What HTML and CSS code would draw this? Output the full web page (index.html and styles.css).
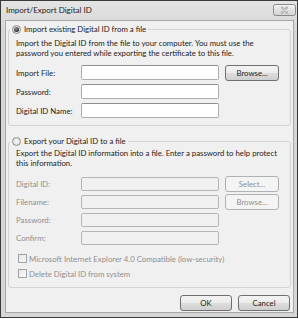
FILE: index.html
```html
<!DOCTYPE html>
<html>
<head>
<meta charset="utf-8">
<link rel="stylesheet" href="styles.css">
</head>
<body>
<div class="window">
  <div class="titlebar">
    <span class="title">Import/Export Digital ID</span>
    <span class="close">
      <svg width="23" height="12" viewBox="0 0 23 12">
        <defs>
          <linearGradient id="cg" x1="0" y1="0" x2="0" y2="1">
            <stop offset="0" stop-color="#f4f4f4"/>
            <stop offset="0.5" stop-color="#e2e2e2"/>
            <stop offset="1" stop-color="#d2d2d2"/>
          </linearGradient>
        </defs>
        <rect x="0.5" y="0.5" width="22" height="11" rx="2" fill="url(#cg)" stroke="#8a8a8a"/>
        <path d="M9 3.5 L14 8.5 M14 3.5 L9 8.5" stroke="#9a9a9a" stroke-width="2.2" stroke-linecap="round"/>
        <path d="M9 3.5 L14 8.5 M14 3.5 L9 8.5" stroke="#f6f6f6" stroke-width="0.9" stroke-linecap="round"/>
      </svg>
    </span>
  </div>
  <div class="client">
    <fieldset class="group group-import">
      <legend class="legend">
        <span class="radio radio-on"></span><span class="legend-text">Import existing Digital ID from a file</span>
      </legend>
      <div class="group-body">
        <p class="desc">Import the Digital ID from the file to your computer. You must use the<br>password you entered while exporting the certificate to this file.</p>
        <div class="form form-import">
          <span class="label">Import File:</span><span class="input"></span><span class="btn">Browse...</span>
          <span class="label">Password:</span><span class="input"></span><span></span>
          <span class="label">Digital ID Name:</span><span class="input"></span><span></span>
        </div>
      </div>
    </fieldset>

    <fieldset class="group group-export">
      <legend class="legend">
        <span class="radio"></span><span class="legend-text">Export your Digital ID to a file</span>
      </legend>
      <div class="group-body">
        <p class="desc">Export the Digital ID information into a file. Enter a password to help protect<br>this information.</p>
        <div class="form form-export">
          <span class="label dis">Digital ID:</span><span class="input dis-input"></span><span class="btn btn-dis">Select...</span>
          <span class="label dis">Filename:</span><span class="input dis-input"></span><span class="btn btn-dis">Browse...</span>
          <span class="label dis">Password:</span><span class="input dis-input"></span><span></span>
          <span class="label dis">Confirm:</span><span class="input dis-input"></span><span></span>
        </div>
        <div class="checks">
          <div class="check-row"><span class="checkbox"></span><span class="dis">Microsoft Internet Explorer 4.0 Compatible (low-security)</span></div>
          <div class="check-row"><span class="checkbox"></span><span class="dis">Delete Digital ID from system</span></div>
        </div>
      </div>
    </fieldset>

    <div class="actions">
      <span class="btn btn-ok">OK</span>
      <span class="btn btn-cancel">Cancel</span>
    </div>
  </div>
</div>
</body>
</html>
```

FILE: styles.css
```css
* { box-sizing: border-box; }
html, body { margin: 0; padding: 0; background: #ffffff; }
body {
  font-family: Lato, "Liberation Sans", Arial, sans-serif;
  font-size: 7.8px;
  color: #1c1c1c;
}
.window {
  width: 298px;
  height: 318px;
  border: 1px solid #3a3a3a;
  background: linear-gradient(#e4e4e4, #d6d6d6 30px, #d6d6d6);
  display: flex;
  flex-direction: column;
}
.titlebar {
  height: 19px;
  display: flex;
  align-items: center;
  justify-content: space-between;
  padding: 0 1px 1px 5px;
}
.title { font-size: 8px; color: #222; }
.close { display: flex; width: 23px; height: 12px; }
.client {
  flex: 1;
  margin: 0 3px 4px 4px;
  border: 1px solid #a8a8a8;
  background: #f0f0f0;
  display: flex;
  flex-direction: column;
}
.group {
  margin: 0 2px;
  padding: 0;
  border: 1px solid #d3d3d3;
  border-radius: 3px;
  min-width: 0;
}
.group-import { margin-top: 3px; }
.group-export { margin-top: 10px; }
.legend {
  padding: 0 2px;
  margin-left: 1px;
  height: 10px;
  display: flex;
  align-items: center;
  white-space: nowrap;
}
.legend-text { margin-left: 3px; }
.radio {
  width: 9px;
  height: 9px;
  border-radius: 50%;
  border: 1px solid #8c8c8c;
  background: radial-gradient(circle at 50% 50%, #f8f8f8 0, #e2e2e2 70%);
  display: flex;
  align-items: center;
  justify-content: center;
}
.radio-on::after {
  content: "";
  width: 5px;
  height: 5px;
  border-radius: 50%;
  background: radial-gradient(circle at 40% 35%, #9a9a9a 0, #2a2a2a 70%);
}
.group-body { padding: 0 6px 7px 7px; }
.group-import .group-body { padding-top: 4px; }
.group-export .group-body { padding-top: 2px; padding-bottom: 9px; }
.desc {
  margin: 0;
  line-height: 10px;
  white-space: nowrap;
}
.form {
  display: grid;
  grid-template-columns: 59px 138px 54px;
  column-gap: 6px;
  align-items: center;
}
.form-import { margin-top: 7px; grid-auto-rows: 15px; row-gap: 4px; }
.form-export { margin-top: 8px; grid-auto-rows: 16px; row-gap: 2px; }
.label { white-space: nowrap; }
.input {
  height: 15px;
  background: #ffffff;
  border: 1px solid #abadb3;
  border-top-color: #8e8f8f;
  border-radius: 2px;
}
.form-export .input { height: 14px; }
.dis { color: #8f8f8f; }
.dis-input {
  background: #f0f0f0;
  border: 1px solid #b5b5b5;
}
.btn {
  height: 16px;
  display: flex;
  align-items: center;
  justify-content: center;
  border: 1px solid #707070;
  border-radius: 3px;
  background: linear-gradient(#f3f3f3 0, #ebebeb 50%, #dddddd 50%, #cfcfcf 100%);
  color: #1c1c1c;
}
.btn-dis {
  border-color: #adb2b5;
  background: #f4f4f4;
  color: #8f8f8f;
}
.checks { margin-top: 8px; display: flex; flex-direction: column; gap: 6px; }
.check-row { display: flex; align-items: center; height: 9px; white-space: nowrap; }
.checkbox {
  width: 9px;
  height: 9px;
  margin: 0 2px 0 2px;
  border: 1px solid #a2a2a2;
  background: linear-gradient(135deg, #e6e6e6, #fbfbfb);
}
.actions {
  margin-top: auto;
  display: flex;
  justify-content: flex-end;
  gap: 6px;
  padding: 0 3px 1px 0;
}
.btn-ok { width: 52px; }
.btn-cancel { width: 52px; }
```
